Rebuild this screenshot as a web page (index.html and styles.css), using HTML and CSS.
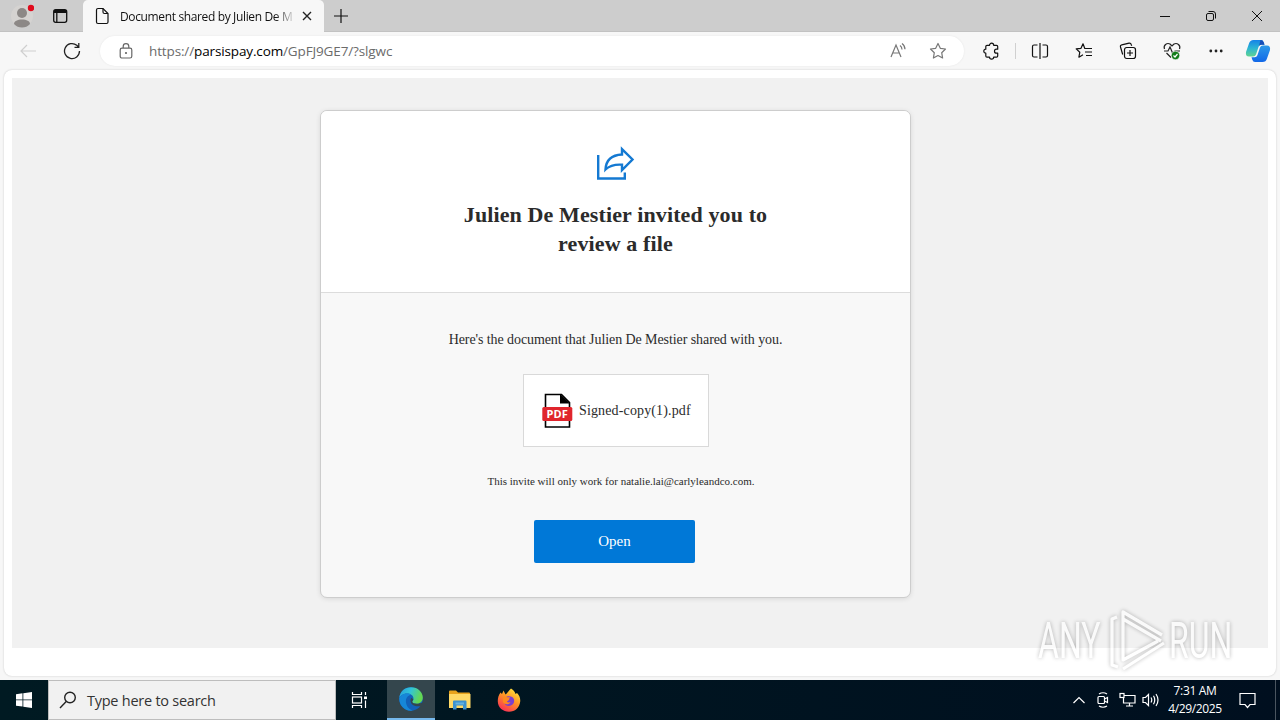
FILE: index.html
```
<!DOCTYPE html>
<html lang="en">

<head>
  <meta charset="UTF-8">
  <meta name="viewport" content="width=device-width, initial-scale=1.0">
  <title>Document shared by Julien De Mestier</title>
  <link rel="stylesheet" href="styles.css">
</head>

<body>
  <!-- tab strip -->
  <div class="tabbar">
    <div class="profile">
      <svg width="24" height="28" viewBox="0 0 24 28">
        <circle cx="12" cy="14" r="11" fill="#d5d3d1" />
        <circle cx="12" cy="11" r="5" fill="#8c8886" />
        <path d="M4 22c0-3 3.500-4.500 8-4.500s8 1.500 8 4.500c-2 2.500-5 3.500-8 3.500s-6-1-8-3.500z" fill="#8c8886" />
        <circle cx="21" cy="6" r="3.200" fill="#e00b1c" />
      </svg>
    </div>
    <div class="tab-actions">
      <svg width="16" height="16" viewBox="0 0 16 16" fill="none" stroke="#111" stroke-width="1.300">
        <rect x="1.700" y="1.700" width="13" height="12.600" rx="2" />
        <path d="M2 3.500h12.500" stroke-width="3" />
        <path d="M4.800 4v10" />
      </svg>
    </div>
    <div class="tab">
      <svg width="14" height="18" viewBox="0 0 14 18" fill="none" stroke="#111" stroke-width="1.200">
        <path d="M3 1.500h5l5 5v8.500q0 1.500-1.500 1.500H3q-1.500 0-1.500-1.500V3q0-1.500 1.500-1.500z" />
        <path d="M8 1.500V5q0 1.500 1.500 1.500H13" />
      </svg>
      <span class="tab-title">Document shared by Julien De M</span>
      <svg class="tab-close" width="10" height="10" viewBox="0 0 10 10" stroke="#222" stroke-width="1.400">
        <path d="M1 1l8 8M9 1l-8 8" />
      </svg>
    </div>
    <div class="new-tab">
      <svg width="14" height="14" viewBox="0 0 14 14" stroke="#111" stroke-width="1.200">
        <path d="M7 0v14M0 7h14" />
      </svg>
    </div>
    <div class="window-buttons">
      <span><svg width="12" height="12" viewBox="0 0 12 12" stroke="#111">
          <path d="M1 6.500h10" />
        </svg></span>
      <span><svg width="12" height="12" viewBox="0 0 12 12" fill="none" stroke="#111">
          <rect x="1.500" y="3.500" width="7" height="7" rx="1.500" />
          <path d="M3.500 1.500h4.500q2.500 0 2.500 2.500v4.500" />
        </svg></span>
      <span><svg width="12" height="12" viewBox="0 0 12 12" stroke="#111">
          <path d="M1 1l10 10M11 1L1 11" />
        </svg></span>
    </div>
  </div>

  <!-- toolbar -->
  <div class="toolbar">
    <div class="nav-button back">
      <svg width="16" height="14" viewBox="0 0 16 14" fill="none" stroke="#cfcfcf" stroke-width="1.200">
        <path d="M16 7H1M7 1L1 7l6 6" />
      </svg>
    </div>
    <div class="nav-button">
      <svg width="18" height="18" viewBox="0 0 18 18" fill="none" stroke="#222" stroke-width="1.300">
        <path d="M16.500 9a7.500 7.500 0 1 1-2.700-5.700L15.500 5M15.800 1v4.300h-4.300" />
      </svg>
    </div>
    <div class="address">
      <svg class="lock" width="14" height="16" viewBox="0 0 14 16" fill="none" stroke="#666" stroke-width="1.200">
        <rect x="1.200" y="5.200" width="11.600" height="9.800" rx="1.800" />
        <path d="M4.200 5V3.500a2.800 2.800 0 0 1 5.600 0V5" />
        <circle cx="7" cy="10" r=".5" />
      </svg>
      <span class="url">https://<b>parsispay.com</b>/GpFJ9GE7/?slgwc</span>
      <svg class="read" width="18" height="18" viewBox="0 0 18 18" fill="none" stroke="#777" stroke-width="1.200">
        <path d="M2 15L7 3l5 12M3.700 11h6.600" />
        <path d="M11 3.500q2 1.500 2 4M13 1.500q3 2.200 3 5.800" />
      </svg>
      <svg width="18" height="18" viewBox="0 0 18 18" fill="none" stroke="#777" stroke-width="1.200" stroke-linejoin="round">
        <path d="M9 1.500l2.300 4.800 5.200.7-3.800 3.700.9 5.300L9 13.500 4.400 16l.9-5.300L1.500 7l5.200-.7z" />
      </svg>
    </div>
    <div class="tool extensions">
      <svg width="18" height="18" viewBox="0 0 18 18" fill="none" stroke="#111" stroke-width="1.200" stroke-linejoin="round">
        <path d="M5 3.300h2.500a2.100 2.100 0 0 1 4.200 0h2.800q1.200 0 1.200 1.200v2.700h-1.200a2 2 0 0 0 0 4h1.200v2.700q0 1.200-1.200 1.200h-2.800a2.100 2.100 0 0 1-4.200 0H5q-1.200 0-1.200-1.200v-2.700a2 2 0 0 1 0-4V4.500q0-1.200 1.200-1.200z" />
      </svg>
    </div>
    <span class="separator"></span>
    <div class="tool">
      <svg width="18" height="18" viewBox="0 0 18 18" fill="none" stroke="#111" stroke-width="1.200">
        <path d="M6.500 3H3Q1.500 3 1.500 4.500v9Q1.500 15 3 15h3.500M11.500 3H15q1.500 0 1.500 1.500v9q0 1.500-1.500 1.500h-3.500M9 1v16" />
      </svg>
    </div>
    <div class="tool">
      <svg width="18" height="18" viewBox="0 0 18 18" fill="none" stroke="#111" stroke-width="1.200" stroke-linejoin="round">
        <path d="M11 6.500H9.800L8 1.800 6 6.300l-4.800.6 3.600 3.300-.9 5L8 12.800M11 6.500h6M10 10h7M11 13.500h6" />
      </svg>
    </div>
    <div class="tool">
      <svg width="18" height="18" viewBox="0 0 18 18" fill="none" stroke="#111" stroke-width="1.200">
        <rect x="5.500" y="5.500" width="11" height="11" rx="2.200" />
        <path d="M3.700 12.500L1.500 5Q1 3.200 2.800 2.800L10 1.200q1.800-.3 2.300 1.500l.4 1M11 8v6M8 11h6" />
      </svg>
    </div>
    <div class="tool">
      <svg width="20" height="18" viewBox="0 0 20 18" fill="none" stroke="#222" stroke-width="1.200">
        <path d="M2.500 7C1 3 5 .5 8 2l2 2 2-2c3-1.500 7 1 5.500 5M4.500 11L9 15.500M2 9h4l2-4 3 7 2-3h5" />
        <circle cx="13.500" cy="13.500" r="4.200" fill="#127c19" stroke="#f7f7f7" stroke-width=".6" />
        <path d="M11.500 13.500l1.500 1.500 2.500-3" stroke="#fff" />
      </svg>
    </div>
    <div class="tool">
      <svg width="16" height="4" viewBox="0 0 16 4" fill="#222">
        <circle cx="2.800" cy="2" r="1.400" />
        <circle cx="8" cy="2" r="1.400" />
        <circle cx="13.200" cy="2" r="1.400" />
      </svg>
    </div>
    <div class="tool copilot">
      <svg width="26" height="24" viewBox="0 0 26 24">
        <defs>
          <linearGradient id="cpLeft" x1="0" y1="0" x2="0" y2="1">
            <stop offset="0" stop-color="#1582e8" />
            <stop offset=".5" stop-color="#2cb5d3" />
            <stop offset="1" stop-color="#61d491" />
          </linearGradient>
          <linearGradient id="cpRight" x1="0" y1="0" x2="0" y2="1">
            <stop offset="0" stop-color="#2d9ae8" />
            <stop offset="1" stop-color="#1268e8" />
          </linearGradient>
        </defs>
        <path d="M8.500 1h7.500q2 0 2.700 2.200l.8 2.600h-3.200q-2 0-2.700 2L11 15.500Q10.400 17.500 8 17.500H4Q.3 17.500 1 13L4 4.500Q5 1 8.500 1z" fill="url(#cpLeft)" />
        <path d="M17.500 23H10q-2 0-2.700-2.200l-.8-2.600h3.200q2 0 2.700-2L15 8.500q.6-2 3-2h4q3.700 0 3 4.500l-3 8.500q-1 3.500-4.500 3.500z" fill="url(#cpRight)" />
        <path d="M15.500 1q2.500 0 3.200 2.200l.8 2.600h-3.200q-1.800 0-2.300 1.500z" fill="#174eb8" />
      </svg>
    </div>
  </div>

  <!-- page -->
  <div class="viewport">
    <div class="page">
      <div class="card">
        <div class="card-header">
          <svg width="42" height="36" viewBox="0 0 42 36" fill="none" stroke="#1479d2" stroke-width="2.400">
            <path d="M3.200 10v23.500h26.600v-6" />
            <path d="M10.500 24.500c.5-9 6-14.500 16.500-15V4.200L37.500 14.500 27 25v-5.300c-8-.5-12.500 1-16.500 4.800z" />
          </svg>
          <h1>Julien De Mestier invited you to<br>review a file</h1>
        </div>
        <div class="card-body">
          <p class="intro">Here's the document that Julien De Mestier shared with you.</p>
          <div class="file">
            <svg width="32" height="36" viewBox="0 0 32 36">
              <path d="M4.500 1.500h16l8 8V34h-24z" fill="#fff" stroke="#000" stroke-width="1.600" />
              <path d="M19 .7l10 9.800H19z" fill="#000" />
              <rect x="1.300" y="14" width="30" height="14" rx="1.500" fill="#e0252d" />
              <text x="16.300" y="25.300" class="pdf-label">PDF</text>
            </svg>
            <span>Signed-copy(1).pdf</span>
          </div>
          <p class="note">This invite will only work for natalie.lai@carlyleandco.com.</p>
          <a class="open-button" href="#">Open</a>
        </div>
      </div>
    </div>
    <div class="watermark">
      <span>ANY</span>
      <svg width="60" height="64" viewBox="0 0 60 64" fill="none" stroke="#fff" stroke-width="3.200" stroke-linejoin="round">
        <path d="M9 8L4 10v46l6 2" />
        <path d="M54 26L15 3v48l35-19M15 10l38 22M15 60l41-26" />
      </svg>
      <span>RUN</span>
    </div>
  </div>

  <!-- taskbar -->
  <div class="taskbar">
    <div class="start">
      <svg width="16" height="16" viewBox="0 0 16 16" fill="#fff">
        <path d="M0 2.300L6.500 1.300v6.200H0zM7.300 1.200L16 0v7.500H7.300zM0 8.300h6.500v6.300L0 13.700zM7.300 8.300H16V16l-8.700-1.200z" />
      </svg>
    </div>
    <div class="search">
      <svg width="18" height="18" viewBox="0 0 18 18" fill="none" stroke="#222" stroke-width="1.400">
        <circle cx="11" cy="6.500" r="5.300" />
        <path d="M7.200 10.500L1 17" />
      </svg>
      <span>Type here to search</span>
    </div>
    <div class="task task-view">
      <svg width="18" height="16" viewBox="0 0 18 16" fill="none" stroke="#fff" stroke-width="1.200">
        <path d="M1.500 0v2.500h9V0M1.500 16v-2.500h9V16" />
        <rect x="1.500" y="5" width="9" height="6" />
        <path d="M14.500 0v3M14.500 8.500V16" />
        <path d="M13 5.800h3" stroke-width="2.600" />
      </svg>
    </div>
    <div class="task active">
      <svg width="24" height="24" viewBox="0 0 24 24">
        <defs>
          <linearGradient id="edgeTop" x1="0" y1="0" x2="1" y2="0.300">
            <stop offset="0" stop-color="#249bdc" />
            <stop offset=".5" stop-color="#32c4d8" />
            <stop offset="1" stop-color="#65d850" />
          </linearGradient>
        </defs>
        <circle cx="12" cy="12" r="11.800" fill="#1261b8" />
        <path d="M.3 11C1 4 6 .2 12 .2c7 0 11.800 5 11.800 10.300 0 4-3 6.300-6.300 6.300-2.500 0-4.300-1-4.300-2 0-.7 1.300-1.300 1.300-3.300C14.500 8.500 11.500 6.500 8 6.500 4 6.500 1 9 .3 11z" fill="url(#edgeTop)" />
        <path d="M.3 11C1.500 8.500 4.500 6.500 8 6.500c1.500 0 3 .4 4.200 1.200C8 8.500 6.500 12 7 15.500c.5 4 3.500 7.500 7 8C6 25 0 18.500.3 11z" fill="#1687d8" />
        <path d="M24 15.500l-1.500 3.200c-4 1.400-11 .3-11-5.200 0-1 .3-2 .9-2.700l2 1.700c-.5 1-1.200 1.700-1.200 2.300 0 1 1.800 2 4.300 2 2.500 0 4.500-.7 6.500-1.300z" fill="#34464d" />
      </svg>
    </div>
    <div class="task">
      <svg width="22" height="20" viewBox="0 0 22 20">
        <path d="M0 1.500q0-1 1-1h6l2 2h11q1 0 1 1v14H0z" fill="#e8a31c" />
        <path d="M0 4h21.500v14H0z" fill="#ffd966" />
        <path d="M4 19.500v-8q0-1 1-1h11.500q1 0 1 1v8H14v-4H7.500v4z" fill="#3d92cf" />
        <path d="M6.500 12.500h8.500v2H6.500z" fill="#66b2df" />
      </svg>
    </div>
    <div class="task">
      <svg width="24" height="24" viewBox="0 0 24 24">
        <defs>
          <linearGradient id="fox" x1=".8" y1="0" x2=".2" y2="1">
            <stop offset="0" stop-color="#ffe93d" />
            <stop offset=".45" stop-color="#ff9325" />
            <stop offset="1" stop-color="#f9275a" />
          </linearGradient>
        </defs>
        <path d="M14 .5c2.500 1.500 4 3.500 4.500 5.500l1.500-1c2.500 2.500 3.500 5.500 3.200 8.500C22.500 20 18 23.800 12 23.800S1 19.500 .8 13.500C.7 10 1.500 7.500 3.500 4.500L5 6l1.500-3.500 2 4C10.500 5 11.500 3 14 .5z" fill="url(#fox)" />
        <path d="M8.500 9.500c2-2 7.500-2 8.500 2 .8 4-2 6.500-5 6.500s-5-2-5-4.500l4-.5 1.500-2z" fill="#7a3fd0" />
        <path d="M6 9c1.500-1 3-.7 4 .3h3c0 2-3 2-3 3.700 0 1 1 2 3.500 1-1 3-6 3-7.500 0z" fill="#ff8a1e" />
      </svg>
    </div>
    <div class="tray">
      <span class="tray-icon"><svg width="12" height="8" viewBox="0 0 12 8" fill="none" stroke="#fff" stroke-width="1.200">
          <path d="M.5 7L6 1.500 11.500 7" />
        </svg></span>
      <span class="tray-icon"><svg width="14" height="18" viewBox="0 0 14 18" fill="none" stroke="#fff" stroke-width="1.200">
          <rect x="2" y="5.500" width="6.500" height="7" rx="1" />
          <path d="M8.500 8l3-1.500v5l-3-1.500M3 3q4-2.500 8 0M3 15q4 2.500 8 0" />
        </svg></span>
      <span class="tray-icon"><svg width="17" height="16" viewBox="0 0 17 16" fill="none" stroke="#fff" stroke-width="1.200">
          <path d="M5 3.500h11v7.500H4.500V6M10.500 11v3M7 14h7" />
          <rect x="1" y="1.500" width="4" height="4" />
        </svg></span>
      <span class="tray-icon"><svg width="18" height="14" viewBox="0 0 18 14" fill="none" stroke="#fff" stroke-width="1.200">
          <path d="M1 4.500h2.500l3-3v11l-3-3H1zM9 4.500q1.500 2.500 0 5M11.500 2.800q2.500 4.200 0 8.400M14 1q4 6 0 12" />
        </svg></span>
      <div class="clock">
        <span>7:31 AM</span>
        <span>4/29/2025</span>
      </div>
      <span class="notifications"><svg width="17" height="17" viewBox="0 0 17 17" fill="none" stroke="#fff" stroke-width="1.200">
          <path d="M1 1.500h15v11h-5l-2.500 3-2.500-3H1z" />
        </svg></span>
    </div>
  </div>
</body>

</html>
```

FILE: styles.css
```
* {
  box-sizing: border-box;
}

body {
  margin: 0;
  width: 1280px;
  height: 720px;
  overflow: hidden;
  display: flex;
  flex-direction: column;
  background-color: #f7f7f7;
  font-family: "Open Sans", "Noto Sans", sans-serif;
  color: #111;
}

svg {
  display: block;
  flex-shrink: 0;
}

/* tab strip */
.tabbar {
  display: flex;
  height: 32px;
  background-color: #cdcdcd;
  border-bottom: 1px solid #c2c2c2;
}

.profile,
.tab-actions,
.new-tab,
.window-buttons span,
.nav-button,
.tool {
  display: flex;
  justify-content: center;
  align-items: center;
}

.profile {
  width: 44px;
}

.tab-actions {
  width: 32px;
  margin-right: 7px;
}

.tab {
  display: flex;
  align-items: center;
  width: 241px;
  height: 32px;
  padding: 0 12px;
  background-color: #f7f7f7;
  border-radius: 5px 5px 0 0;
}

.tab-title {
  width: 176px;
  margin-left: 11px;
  white-space: nowrap;
  font-size: 12px;
  letter-spacing: -0.36px;
  color: transparent;
  background: linear-gradient(90deg, #111 155px, #ddd 174px);
  -webkit-background-clip: text;
  background-clip: text;
}

.tab-close {
  margin-left: 6px;
}

.new-tab {
  width: 34px;
}

.window-buttons {
  display: flex;
  margin-left: auto;
}

.window-buttons span {
  width: 46px;
}

/* toolbar */
.toolbar {
  display: flex;
  align-items: center;
  height: 38px;
  padding-left: 6px;
}

.nav-button {
  width: 44px;
}

.address {
  display: flex;
  align-items: center;
  width: 864px;
  height: 30px;
  margin-left: 6px;
  padding: 0 17px 0 19px;
  background-color: #fff;
  border-radius: 15px;
  box-shadow: 0 0 2px #e4e4e4;
}

.url {
  margin-left: 16px;
  margin-right: auto;
  font-size: 13.5px;
  letter-spacing: -0.13px;
  color: #6b6b6b;
}

.url b {
  font-weight: 400;
  color: #000;
}

.read {
  margin-right: 22px;
}

.tool {
  width: 44px;
}

.extensions {
  margin-left: 5px;
}

.separator {
  width: 1px;
  height: 16px;
  margin: 0 2px;
  background-color: #d0d0d0;
}

.copilot {
  width: 40px;
}

/* page */
.viewport {
  position: relative;
  height: 606px;
  margin: 0 4px 4px;
  padding: 8px;
  background-color: #fff;
  border-radius: 8px;
  box-shadow: 0 0 2px #c4c4c4;
}

.page {
  height: 570px;
  padding: 32px 0 0 308px;
  background-color: #f1f1f1;
  font-family: "Liberation Serif", "Times New Roman", serif;
  color: #2b2b2b;
}

.card {
  width: 591px;
  height: 488px;
  background-color: #f8f8f8;
  border: 1px solid #cdcdcd;
  border-radius: 7px;
  box-shadow: 0 1px 5px rgba(0, 0, 0, 0.1);
  overflow: hidden;
}

.card-header {
  display: flex;
  flex-direction: column;
  align-items: center;
  height: 182px;
  padding-top: 34px;
  background-color: #fff;
  border-bottom: 1px solid #dcdcdc;
}

.card-header h1 {
  margin: 19px 0 0;
  font-size: 22px;
  line-height: 29px;
  letter-spacing: 0.12px;
  text-align: center;
}

.card-body {
  display: flex;
  flex-direction: column;
  align-items: center;
}

.intro {
  margin: 37px 0 0;
  font-size: 14px;
  line-height: 20px;
  letter-spacing: -0.08px;
}

.file {
  display: flex;
  align-items: center;
  width: 186px;
  height: 73px;
  margin: 24px 0 0 1px;
  padding-left: 17px;
  gap: 6px;
  background-color: #fff;
  border: 1px solid #d9d9d9;
  font-size: 14px;
  letter-spacing: 0.14px;
}

.pdf-label {
  font-family: "Open Sans", sans-serif;
  font-size: 11px;
  font-weight: 700;
  text-anchor: middle;
  fill: #fff;
}

.note {
  margin: 26px 0 0 11px;
  font-size: 11px;
  line-height: 16px;
}

.open-button {
  width: 161px;
  height: 43px;
  margin: 31px 2px 0 0;
  background-color: #0078d7;
  border-radius: 2px;
  color: #fff;
  font-size: 15px;
  line-height: 43px;
  text-align: center;
  text-decoration: none;
}

/* overlay logo in the lower right corner */
.watermark {
  position: absolute;
  left: 1034px;
  top: 538px;
  display: flex;
  align-items: center;
  color: #fff;
  font-family: Roboto, sans-serif;
  font-size: 50px;
  line-height: 66px;
  opacity: 0.7;
  filter: drop-shadow(0 0 2px rgba(0, 0, 0, 0.4));
}

.watermark span {
  width: 64px;
  transform: scaleX(0.64);
  transform-origin: 0 50%;
}

.watermark svg {
  margin: 0 1px 0 6px;
}

/* taskbar */
.taskbar {
  display: flex;
  height: 40px;
  background: linear-gradient(90deg, #001a22, #000f1f);
}

.start,
.task {
  display: flex;
  justify-content: center;
  align-items: center;
  width: 48px;
}

.task-view {
  margin-right: 3px;
}

.active {
  background-color: #34464d;
  border-bottom: 2px solid #76b9ed;
}

.search {
  display: flex;
  align-items: center;
  width: 288px;
  padding-left: 10px;
  gap: 10px;
  background-color: #f1f1f1;
  border: 1px solid #bdbdbd;
  color: #333;
  font-size: 14.5px;
  letter-spacing: -0.25px;
}

.task + .task {
  margin-right: 1px;
}

.tray {
  display: flex;
  align-items: center;
  margin-left: auto;
  color: #fff;
}

.tray-icon {
  display: flex;
  justify-content: center;
  width: 24px;
}

.clock {
  display: flex;
  flex-direction: column;
  align-items: center;
  width: 64px;
  font-size: 12px;
  line-height: 18px;
  letter-spacing: -0.35px;
}

.notifications {
  display: flex;
  justify-content: center;
  align-items: center;
  width: 49px;
  height: 40px;
  padding-right: 8px;
  margin-right: 4px;
  border-right: 1px solid #4a5560;
}
```
